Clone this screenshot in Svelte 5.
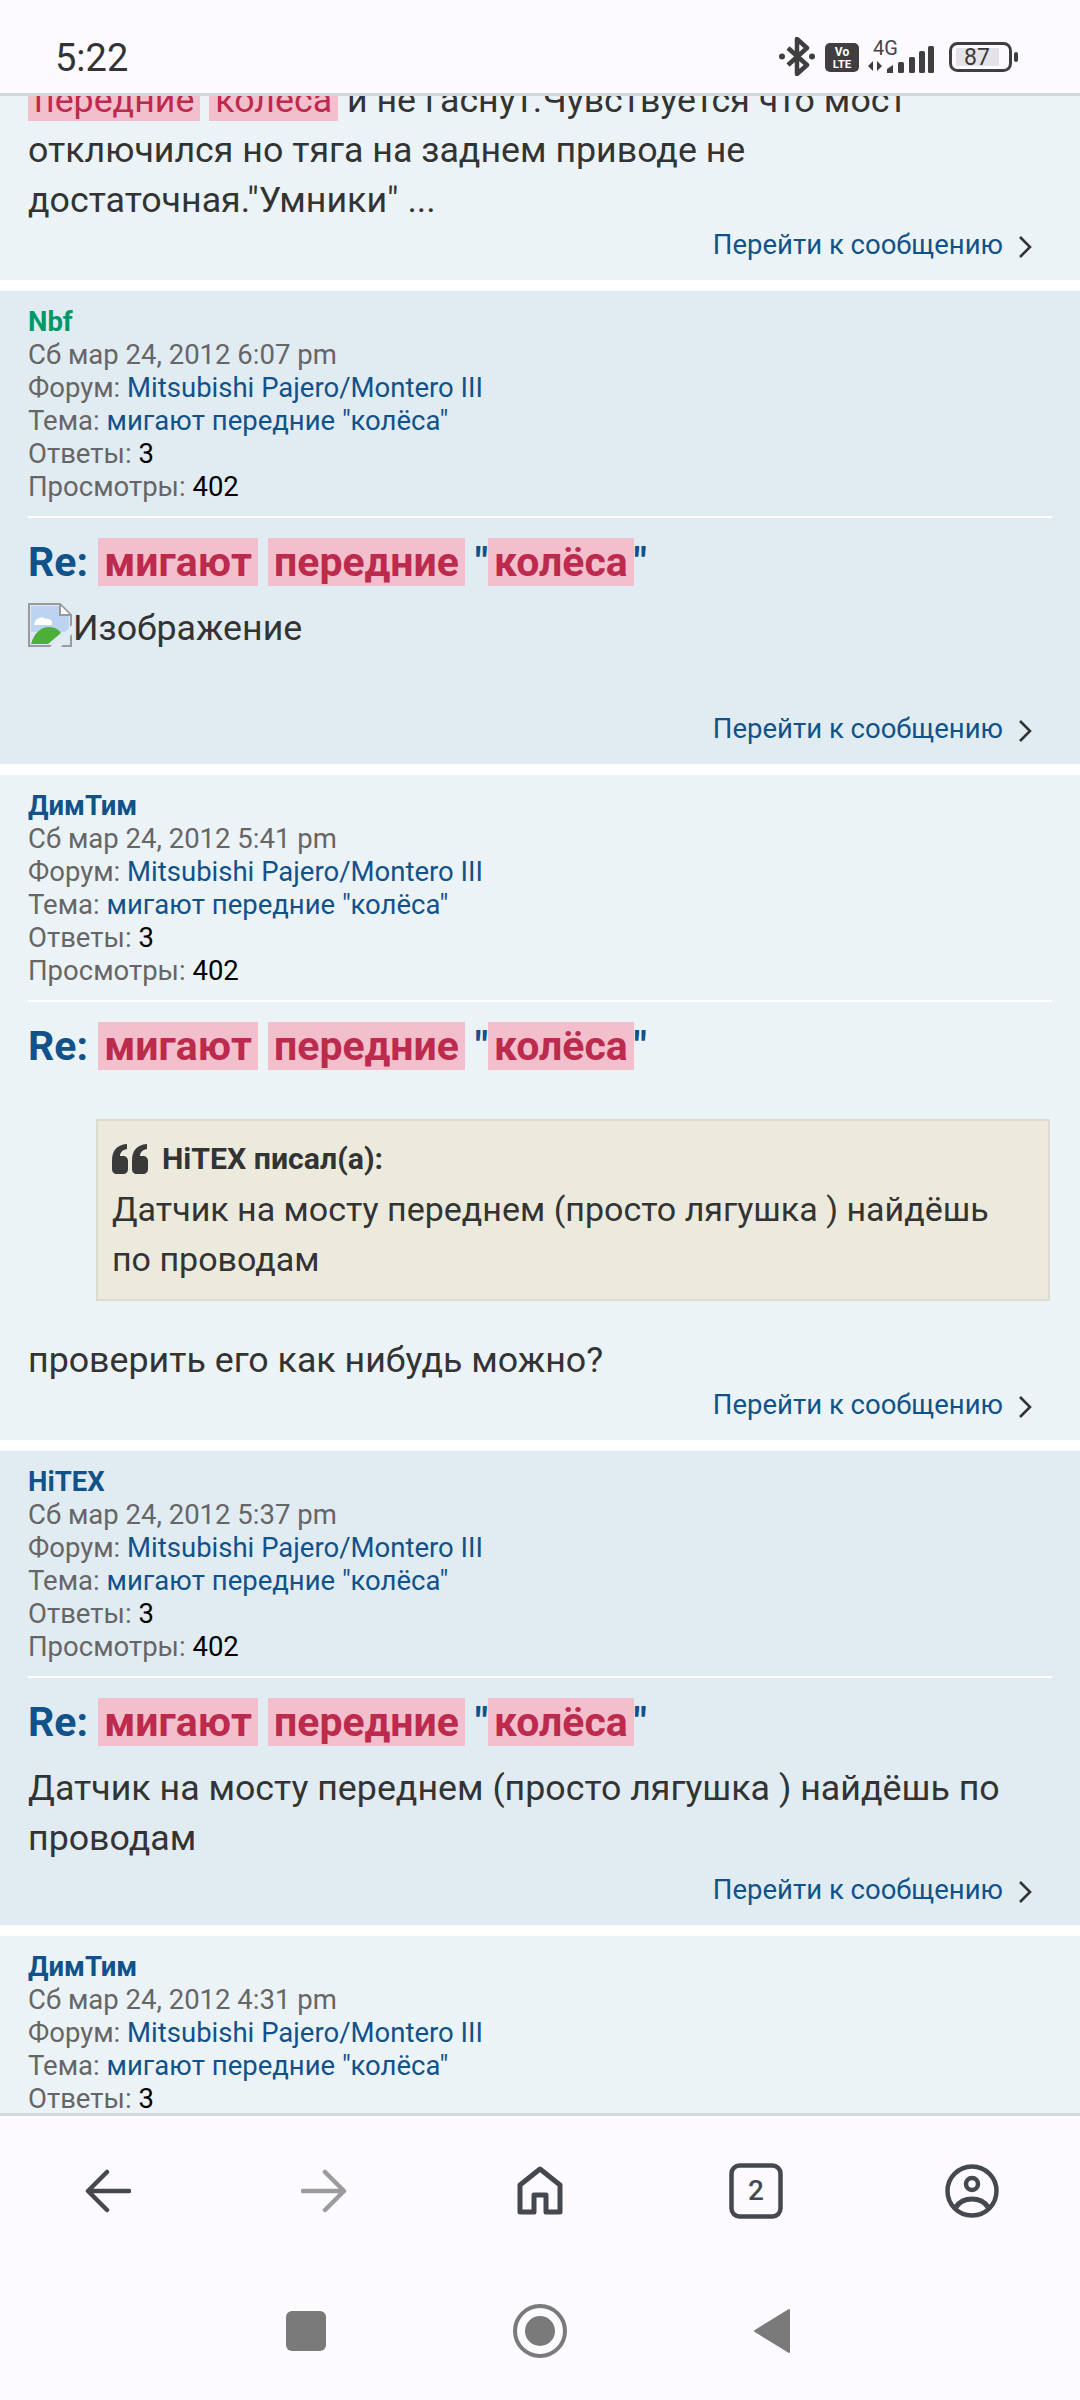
<script>
	const posts = [
		{ author: "Nbf", color: "#009966", date: "Сб мар 24, 2012 6:07 pm", kind: "image", bg: "dark" },
		{ author: "ДимТим", color: "#105289", date: "Сб мар 24, 2012 5:41 pm", kind: "quote", bg: "light" },
		{ author: "HiTEX", color: "#105289", date: "Сб мар 24, 2012 5:37 pm", kind: "plain", bg: "dark" }
	];
</script>

<style>
	:global(body) {
		margin: 0;
		background: #fff;
	}

	.screen {
		width: 1080px;
		height: 2400px;
		display: flex;
		flex-direction: column;
		overflow: hidden;
		font-family: Roboto, "Liberation Sans", sans-serif;
		background: #fdfbff;
		color: #333;
	}

	.status {
		height: 93px;
		flex: none;
		box-sizing: border-box;
		display: flex;
		align-items: flex-start;
		padding: 36px 62px 0 55px;
	}

	.time {
		font-size: 38px;
		line-height: 44px;
		font-weight: 400;
		color: #333;
		margin-right: auto;
	}

	.status-icons {
		display: flex;
		align-items: flex-start;
		padding-top: 1px;
	}

	.status-icons svg {
		display: block;
	}

	.main {
		flex: 1;
		min-height: 0;
		overflow: hidden;
		border-top: 3px solid #d0d8da;
		border-bottom: 3px solid #d0d8da;
		background: #fff;
	}

	.list {
		margin-top: -21px;
		display: flex;
		flex-direction: column;
		gap: 11px;
	}

	.post {
		padding: 14px 28px 0;
	}

	.post.light {
		background: #ecf3f7;
	}

	.post.dark {
		background: #e1ebf2;
	}

	.first {
		padding-top: 0;
	}

	.meta {
		font-size: 27.5px;
		line-height: 33px;
		color: #666;
		padding-bottom: 13px;
		border-bottom: 2px solid #fff;
	}

	.author {
		font-weight: 700;
	}

	.meta a,
	.goto a {
		color: #105289;
		text-decoration: none;
	}

	.meta b {
		font-weight: 400;
		color: #000;
	}

	h3 {
		margin: 0;
		padding-top: 19px;
		font-size: 41px;
		line-height: 50px;
		font-weight: 700;
		color: #105289;
	}

	mark {
		background: #f3bfcc;
		color: #bc2a4d;
		padding: 0 6px;
	}

	.body {
		font-size: 35.75px;
		line-height: 50px;
		color: #333;
	}

	.content {
		padding-top: 16px;
	}

	.plain {
		padding-bottom: 7px;
	}

	.broken {
		display: flex;
		align-items: flex-start;
		height: 50px;
		margin-bottom: 56px;
	}

	.broken svg {
		display: block;
		flex: none;
		margin-right: 1px;
	}

	blockquote {
		margin: 32px 2px 34px 68px;
		padding: 13px 14px 15px;
		background: #ebeadd;
		border: 2px solid #dbdbce;
		font-size: 34px;
	}

	cite {
		display: flex;
		align-items: center;
		gap: 14px;
		font-style: normal;
		font-weight: 700;
		font-size: 30.25px;
		height: 50px;
	}

	.goto {
		display: flex;
		justify-content: flex-end;
		align-items: center;
		gap: 15px;
		height: 50px;
		padding-right: 20px;
		font-size: 27.5px;
		margin-top: -6px;
		padding-bottom: 11px;
	}

	.goto svg {
		display: block;
		margin-top: 5px;
	}

	.toolbar {
		flex: none;
		height: 134px;
		padding-top: 8px;
		display: grid;
		grid-template-columns: repeat(5, 1fr);
		align-items: center;
		justify-items: center;
	}

	.sysnav {
		flex: none;
		height: 142px;
		display: flex;
		justify-content: center;
		align-items: flex-start;
		gap: 187px;
		padding-right: 4px;
	}

	.toolbar svg,
	.sysnav svg {
		display: block;
	}
</style>

{#snippet title()}
	<h3>Re: <mark>мигают</mark> <mark>передние</mark> "<mark>колёса</mark>"</h3>
{/snippet}

{#snippet goto()}
	<div class="goto">
		<a href="#top">Перейти к сообщению</a>
		<svg width="14" height="24" viewBox="0 0 14 24"><path d="M2 2l10 10L2 22" fill="none" stroke="#333" stroke-width="2.6" /></svg>
	</div>
{/snippet}

{#snippet meta(p)}
	<div class="meta">
		<div class="author" style="color: {p.color}">{p.author}</div>
		<div>{p.date}</div>
		<div>Форум: <a href="#forum">Mitsubishi Pajero/Montero III</a></div>
		<div>Тема: <a href="#topic">мигают передние "колёса"</a></div>
		<div>Ответы: <b>3</b></div>
		<div>Просмотры: <b>402</b></div>
	</div>
{/snippet}

<div class="screen">
	<div class="status">
		<div class="time">5:22</div>
		<div class="status-icons">
			<svg width="36" height="39" viewBox="0 0 36 39"><path d="M9 11l19 17-10 9V2l10 9L9 28" fill="none" stroke="#3f3f3f" stroke-width="4.5" stroke-linejoin="round" /><circle cx="3" cy="19.500" r="3" fill="#3f3f3f" /><circle cx="33" cy="19.500" r="3" fill="#3f3f3f" /></svg>
			<svg width="34" height="29" viewBox="0 0 34 29" style="margin: 6px 9px 0 10px"><rect width="34" height="29" rx="5" fill="#3f3f3f" /><text x="17" y="13" text-anchor="middle" font-size="12" font-weight="700" fill="#fff" font-family="Roboto">Vo</text><text x="17" y="25" text-anchor="middle" font-size="11.500" font-weight="700" fill="#fff" font-family="Roboto">LTE</text></svg>
			<svg width="66" height="39" viewBox="0 -3 66 39" style="margin-right: 15px"><text x="5" y="15" font-size="20" fill="#444" font-family="Roboto">4G</text><path d="M0 26l5-5v10zM9 21v10l5-5z" fill="#3f3f3f" /><g fill="#3f3f3f"><path d="M19 33v-4l6-4v8z" /><rect x="30" y="22" width="6" height="11" rx="1.500" /><rect x="41" y="17" width="6" height="16" rx="1.500" /><rect x="51" y="11" width="6" height="22" rx="1.500" /><rect x="60" y="6" width="6" height="27" rx="1.500" /></g></svg>
			<svg width="69" height="30" viewBox="0 0 69 30" style="margin-top: 5px"><rect x="1.500" y="1.500" width="60" height="27" rx="7" fill="none" stroke="#3f3f3f" stroke-width="3" /><rect x="7" y="6" width="43" height="18" fill="#e4e4e8" /><text x="28" y="23" text-anchor="middle" font-size="23" fill="#3a3a3a" font-family="Roboto">87</text><rect x="65" y="10" width="4" height="10" rx="2" fill="#3f3f3f" /></svg>
		</div>
	</div>

	<div class="main">
		<div class="list">
			<div class="post light first">
				<div class="body"><mark>передние</mark> <mark>колеса</mark> и не гаснут.Чувствуется что мост<br />отключился но тяга на заднем приводе не<br />достаточная."Умники" ...</div>
				{@render goto()}
			</div>

			{#each posts as p}
				<div class="post {p.bg}">
					{@render meta(p)}
					{@render title()}
					<div class="body content" class:plain={p.kind === "plain"}>
						{#if p.kind === "image"}
							<div class="broken">
								<svg width="44" height="44" viewBox="0 0 44 44">
									<path d="M1 1h31l11 11v31H1z" fill="#dfe8f6" stroke="#9a9a9a" stroke-width="2" />
									<path d="M3 3h28v10h10v16H3z" fill="#bcd3f2" />
									<path d="M6 22c1-8 9-9 12-6 4-1 7 2 6 6z" fill="#fff" />
									<path d="M3 41c3-11 10-17 18-17 6 0 10 3 12 6L20 41z" fill="#4caf3a" />
									<path d="M32 2v10h10" fill="#fff" stroke="#9a9a9a" stroke-width="2" />
									<path d="M22 44l22-22v9L33 44z" fill="#e1ebf2" />
								</svg>
								<span>Изображение</span>
							</div>
						{:else if p.kind === "quote"}
							<blockquote>
								<cite>
									<svg width="36" height="30" viewBox="0 0 36 30"><path d="M0 17C0 7 4 1 15 0v5c-5 1-7 4-7 7h3c3 0 5 2 5 5v8c0 3-2 5-5 5H5c-3 0-5-2-5-5zM20 17C20 7 24 1 35 0v5c-5 1-7 4-7 7h3c3 0 5 2 5 5v8c0 3-2 5-5 5h-6c-3 0-5-2-5-5z" fill="#3a3a3a" /></svg>
									<span>HiTEX писал(а):</span>
								</cite>
								Датчик на мосту переднем (просто лягушка ) найдёшь<br />по проводам
							</blockquote>
							проверить его как нибудь можно?
						{:else}
							Датчик на мосту переднем (просто лягушка ) найдёшь по<br />проводам
						{/if}
					</div>
					{@render goto()}
				</div>
			{/each}

			<div class="post light">
				{@render meta({ author: "ДимТим", color: "#105289", date: "Сб мар 24, 2012 4:31 pm" })}
			</div>
		</div>
	</div>

	<div class="toolbar">
		<svg width="46" height="44" viewBox="0 0 46 44"><path d="M44 22H4M22 3L3 22l19 19" fill="none" stroke="#45484f" stroke-width="4.500" stroke-linecap="round" stroke-linejoin="round" /></svg>
		<svg width="46" height="44" viewBox="0 0 46 44"><path d="M2 22h40M24 3l19 19-19 19" fill="none" stroke="#9b9b9d" stroke-width="4.500" stroke-linecap="round" stroke-linejoin="round" /></svg>
		<svg width="46" height="50" viewBox="0 0 46 50"><path d="M3 46V19L23 3l20 16v27H29V29H17v17z" fill="none" stroke="#45484f" stroke-width="5" stroke-linejoin="round" /></svg>
		<svg width="54" height="56" viewBox="0 0 54 56"><rect x="2.500" y="2.500" width="49" height="51" rx="8" fill="none" stroke="#45484f" stroke-width="4.500" /><text x="27" y="37" text-anchor="middle" font-size="28" font-weight="500" fill="#45484f" font-family="Roboto">2</text></svg>
		<svg width="54" height="56" viewBox="0 0 54 56"><circle cx="27" cy="28" r="24.500" fill="none" stroke="#45484f" stroke-width="4.500" /><circle cx="27" cy="21" r="6" fill="none" stroke="#45484f" stroke-width="4.500" /><path d="M11 44c4-6 10-8 16-8s12 2 16 8" fill="none" stroke="#45484f" stroke-width="5" /></svg>
	</div>

	<div class="sysnav">
		<svg width="40" height="40" viewBox="0 0 40 40" style="margin-top: 53px"><rect width="40" height="40" rx="6" fill="#7a7a7a" /></svg>
		<svg width="54" height="54" viewBox="0 0 54 54" style="margin-top: 46px"><circle cx="27" cy="27" r="25" fill="none" stroke="#7a7a7a" stroke-width="4" /><circle cx="27" cy="27" r="15" fill="#7a7a7a" /></svg>
		<svg width="36" height="46" viewBox="0 0 36 46" style="margin-top: 50px"><path d="M35 2v42L1 23z" fill="#7a7a7a" stroke="#7a7a7a" stroke-width="2" stroke-linejoin="round" /></svg>
	</div>
</div>
